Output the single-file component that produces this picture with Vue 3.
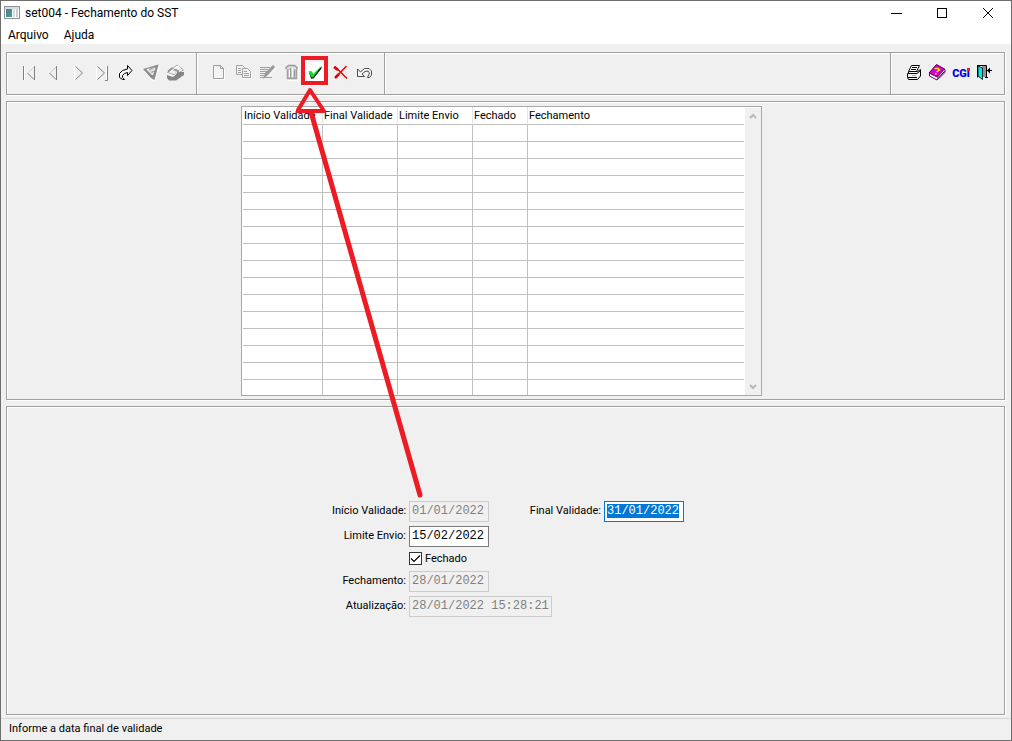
<script setup>
import { onMounted, ref } from 'vue'

const columns = ['Início Validade', 'Final Validade', 'Limite Envio', 'Fechado', 'Fechamento']
const emptyRows = 16

const inicio = ref('01/01/2022')
const final = ref('31/01/2022')
const limite = ref('15/02/2022')
const fechado = ref(true)
const fechamento = ref('28/01/2022')
const atualizacao = ref('28/01/2022 15:28:21')
const finalInput = ref(null)

onMounted(() => {
  finalInput.value.focus()
  finalInput.value.select()
})
</script>

<template>
  <div class="window">
    <header class="titlebar">
      <svg class="app-icon" width="16" height="14" viewBox="0 0 16 14" aria-hidden="true">
        <defs>
          <linearGradient id="pane" x1="0" y1="0" x2="1" y2="1">
            <stop offset="0" stop-color="#4a78a8" />
            <stop offset="1" stop-color="#4aa870" />
          </linearGradient>
        </defs>
        <rect x="0.5" y="0.5" width="15" height="12" fill="#fff" stroke="#8c9298" />
        <rect x="1" y="1" width="14" height="2" fill="#d8dce0" />
        <rect x="2" y="3" width="6" height="8" fill="url(#pane)" />
        <rect x="9" y="3" width="2" height="8" fill="#d5dde2" />
        <rect x="12" y="3" width="2" height="8" fill="#c8d0d4" />
      </svg>
      <h1>set004 - Fechamento do SST</h1>
      <div class="controls">
        <button type="button" aria-label="Minimizar"><svg width="12" height="12" viewBox="0 0 12 12"><path d="M1 6.500H12" stroke="#000" /></svg></button>
        <button type="button" aria-label="Maximizar"><svg width="12" height="12" viewBox="0 0 12 12"><rect x="1.500" y="1.500" width="9" height="9" fill="none" stroke="#000" /></svg></button>
        <button type="button" aria-label="Fechar"><svg width="12" height="12" viewBox="0 0 12 12"><path d="M1 1L11 11M11 1L1 11" stroke="#000" /></svg></button>
      </div>
    </header>

    <nav class="menu">
      <button type="button">Arquivo</button>
      <button type="button">Ajuda</button>
    </nav>

    <main class="body">
      <div class="toolbar etched">
        <div class="group">
          <button type="button" aria-label="Primeiro">
            <svg viewBox="16 62 24 24"><path d="M23.500 66V80M27 72L33 66" stroke="#fff" fill="none" /><path d="M22.500 66V80M33.500 66V80M33 79.500L26.500 73" stroke="#808080" fill="none" /><path d="M27 72.500L33 66.500" stroke="#c4c4c4" /><path d="M26 72L32.500 65.500" stroke="#fff" /></svg>
          </button>
          <button type="button" aria-label="Anterior">
            <svg viewBox="40 62 24 24"><path d="M48 72.500L55 65.500" stroke="#fff" /><path d="M55.500 66V80M55 79.500L48.500 73" stroke="#808080" fill="none" /><path d="M49 72.500L55 67" stroke="#c4c4c4" /></svg>
          </button>
          <button type="button" aria-label="Próximo">
            <svg viewBox="64 62 24 24"><path d="M73.500 66V80" stroke="#fff" /><path d="M74.500 66.500L81.500 73L74.500 79.500" stroke="#808080" fill="none" /></svg>
          </button>
          <button type="button" aria-label="Último">
            <svg viewBox="88 62 24 24"><path d="M95.500 66V80M105.500 66V80" stroke="#fff" /><path d="M96.500 66.500L103.500 73L96.500 79.500M106.500 66V80.500H104" stroke="#808080" fill="none" /></svg>
          </button>
          <button type="button" aria-label="Ir para">
            <svg viewBox="112 62 24 24"><path d="M121.500 79.500L118.500 77.500V73.500L121.500 70.500L126.500 69V65.500L131 70.500L126.500 75.500V72.500L123.500 73.500L121.500 75.500V77.500L123.500 79.500Z" fill="#f4f4f4" stroke="#000" /></svg>
          </button>
          <button type="button" aria-label="Filtrar">
            <svg viewBox="136 62 24 24"><path d="M143 71L153 82L158.500 66" stroke="#fff" fill="none" /><path d="M142 69L157.500 64.500L153.500 80L150 78Z" fill="#8c8c8c" /><path d="M146 69.500L154 67.500L151.500 75Z" fill="#d8d8d8" stroke="#fff" /><path d="M148 69.500L154.500 67M150.500 72.500L154 71" stroke="#909090" /></svg>
          </button>
          <button type="button" aria-label="Consultar">
            <svg viewBox="159 62 24 24"><path d="M165.500 72.500L175 65L181.500 70L173 75Z" fill="#f0f0f0" stroke="#aaa" /><path d="M165 75L171 77L174 72H182V75L174 80.500H167L165 78Z" fill="#858585" /><path d="M166 71.500L170 68.500L177 71.500" stroke="#999" fill="none" stroke-width="2" /><path d="M169 71L176 66L179 69M166 74L172 76L175 72" stroke="#fff" fill="none" /></svg>
          </button>
        </div>
        <div class="group">
          <button type="button" aria-label="Novo">
            <svg viewBox="205 62 24 24"><path d="M213.500 79.500H223.500V69" stroke="#fff" fill="none" /><path d="M212.500 65.500H219.500L222.500 68.500V78.500H212.500ZM219.500 65.500V68.500H222.500" fill="#f4f4f4" stroke="#a0a0a0" /></svg>
          </button>
          <button type="button" aria-label="Copiar">
            <svg viewBox="229 62 24 24"><g fill="#f2f2f2" stroke="#a0a0a0"><path d="M235.500 65.500H241.500L243.500 67.500V74.500H235.500Z" /><path d="M241.500 68.500H246.500L249.500 71.500V77.500H241.500Z" /></g><path d="M237 68.500H240M237 70.500H240M237 72.500H240M243 71.500H246M243 73.500H248M243 75.500H248" stroke="#a0a0a0" /><path d="M242 78.500H250.500V72" stroke="#fff" fill="none" /></svg>
          </button>
          <button type="button" aria-label="Editar">
            <svg viewBox="253 62 24 24"><path d="M259 67.500H269M259 69.500H267M259 71.500H266M259 73.500H264M259 75.500H263M259 77.500H271" stroke="#a0a0a0" /><path d="M262 79L264 73L272 65L274 67L267 75Z" fill="#999" /><path d="M268 76L275 68" stroke="#fff" /></svg>
          </button>
          <button type="button" aria-label="Excluir">
            <svg viewBox="277 62 24 24"><path d="M297.500 67V70L296.500 80.500H287" stroke="#fff" fill="none" /><path d="M285 69V67.500L287.500 65.500H293.500L296 67.500V69" fill="#ddd" stroke="#999" stroke-width="1.500" /><path d="M286.500 69V78.500H295.500V69" fill="#ccc" stroke="#a0a0a0" stroke-width="1.500" /><path d="M289.500 68V78M293.500 70V78" stroke="#999" /><path d="M288.500 70V77M291.500 68V77" stroke="#fff" /></svg>
          </button>
          <button type="button" class="confirm" aria-label="Confirmar">
            <svg viewBox="301 62 24 24"><path d="M308 72.500H311L312.500 75L320.500 66.500V68.500L312.500 78.500H310Z" fill="#000" /><path d="M308 71.500H310.500L312 74.500L320 66.500L312 77H310.500Z" fill="#00ef20" stroke="#00e820" stroke-width=".7" /></svg>
          </button>
          <button type="button" aria-label="Cancelar">
            <svg viewBox="325 62 24 24"><path d="M334 66.500L346 78.500M345.500 66L335 77" stroke="#f00000" stroke-width="1.500" fill="none" /><path d="M333 67L337 70M334 78L338 74" stroke="#e00000" stroke-width="2.500" /></svg>
          </button>
          <button type="button" aria-label="Desfazer">
            <svg viewBox="349 62 24 24"><path d="M356.500 69V76.500H363.500L361 74L364 71.500L367 71L368.500 73L366.500 77.500H368.500L370.500 75V71L368 68.500H363.500L359.500 72Z" fill="#f6f6f6" stroke="#222" stroke-width=".8" /></svg>
          </button>
        </div>
        <div class="group filler"></div>
        <div class="group system">
          <button type="button" aria-label="Imprimir">
            <svg viewBox="900 62 24 24"><path d="M910.500 65.500H918.500L915.500 71.500H907.500Z" fill="#fff" stroke="#000" /><path d="M911 67.500H916M910 69.500H915" stroke="#000" /><path d="M906.500 73.500L908.500 71.500H916.500L919.500 69.500V76L916.500 79.500H907.500L906.500 77.500Z" fill="#eee" stroke="#000" /><path d="M907 73.500H916L919 71M907 77.500H916" stroke="#000" fill="none" /><path d="M911 75.500H915" stroke="#cccc00" /></svg>
          </button>
          <button type="button" aria-label="Ajuda">
            <svg viewBox="924 62 24 24"><path d="M928.500 73L935.500 65L944 69.500V72.500L936 80L928.500 76Z" fill="#fff" stroke="#700070" /><path d="M928 73L935.500 64.500L943.500 69L936 77Z" fill="#d000d0" stroke="#600060" /><path d="M933.500 68.500H937L938.500 70L935.500 72M934 73.500L935.500 74" stroke="#ffe800" stroke-width="1.500" fill="none" /><path d="M936 78.500L943.500 71.500" stroke="#000" /></svg>
          </button>
          <button type="button" class="brand"><span>CGi</span><i></i></button>
          <button type="button" aria-label="Sair">
            <svg viewBox="972 62 24 24"><path d="M976.500 66V77.500M976 65.500H985.500V77" fill="none" stroke="#000" /><rect x="981" y="66" width="4" height="11" fill="#909090" /><path d="M977 66L981.500 68V79.500L977 76Z" fill="#00e8e8" stroke="#000" stroke-width=".8" /><path d="M984 77.500H987M986 70.500H991" stroke="#000" /><path d="M986 70.500L989 67.500V73.500Z" fill="#000" /></svg>
          </button>
        </div>
      </div>

      <section class="list etched">
        <div class="grid">
          <table>
            <thead>
              <tr><th v-for="c in columns" :key="c" scope="col">{{ c }}</th></tr>
            </thead>
            <tbody>
              <tr v-for="r in emptyRows" :key="r"><td v-for="c in columns" :key="c"></td></tr>
            </tbody>
          </table>
          <div class="scroll">
            <button type="button" aria-label="Rolar para cima"><svg width="8" height="6" viewBox="0 0 8 6"><path d="M1 5L4 2L7 5" fill="none" stroke="#b8b8b8" stroke-width="2" /></svg></button>
            <button type="button" aria-label="Rolar para baixo"><svg width="8" height="6" viewBox="0 0 8 6"><path d="M1 1L4 4L7 1" fill="none" stroke="#b8b8b8" stroke-width="2" /></svg></button>
          </div>
        </div>
      </section>

      <section class="detail etched">
        <form class="form" @submit.prevent>
          <label for="inicio">Início Validade:</label>
          <input id="inicio" v-model="inicio" class="date" type="text" disabled>
          <label for="final">Final Validade:</label>
          <input id="final" ref="finalInput" v-model="final" class="date" type="text">

          <label for="limite" class="start">Limite Envio:</label>
          <input id="limite" v-model="limite" class="date" type="text">

          <div class="check">
            <input id="fechado" v-model="fechado" type="checkbox">
            <label for="fechado">Fechado</label>
          </div>

          <label for="fechamento" class="start">Fechamento:</label>
          <input id="fechamento" v-model="fechamento" class="date" type="text" disabled>

          <label for="atualizacao" class="start">Atualização:</label>
          <input id="atualizacao" v-model="atualizacao" class="stamp" type="text" disabled>
        </form>
      </section>
    </main>

    <footer class="status">Informe a data final de validade</footer>

    <svg class="callout" width="140" height="450" viewBox="296 52 140 450" aria-hidden="true">
      <g fill="none" stroke="#ed1c24">
        <rect x="303" y="58" width="23" height="25" stroke-width="4" />
        <path d="M310 90L297.500 111H324Z" stroke-width="4" stroke-linejoin="round" />
        <path d="M311 112L420 495" stroke-width="5" stroke-linecap="round" />
      </g>
    </svg>
  </div>
</template>

<style>
body { margin: 0; }
</style>

<style scoped>
* { box-sizing: border-box; }
.window {
  position: relative;
  display: flex;
  flex-direction: column;
  min-height: 100vh;
  border: 1px solid #6e6e6e;
  background: #f0f0f0;
  color: #000;
  font: 11px/14px Roboto, "Liberation Sans", sans-serif;
}
button {
  display: flex;
  align-items: center;
  justify-content: center;
  margin: 0;
  padding: 0;
  border: 0;
  background: none;
  color: inherit;
  font: inherit;
}
.titlebar {
  display: flex;
  align-items: center;
  height: 24px;
  padding-left: 3px;
  background: #fff;
}
h1 {
  flex: 1;
  margin: 0 0 0 5px;
  font: 12px/16px Roboto, "Open Sans", sans-serif;
}
.controls { display: flex; }
.controls button { width: 46px; height: 24px; }
.menu {
  display: flex;
  gap: 15px;
  height: 19px;
  padding-left: 7px;
  background: #fff;
}
.menu button { font: 12px/20px Roboto, "Open Sans", sans-serif; }
.body {
  display: flex;
  flex: 1;
  flex-direction: column;
  gap: 6px;
  padding: 8px 6px 3px 5px;
}
.etched {
  border: 1px solid #a0a0a0;
  box-shadow: inset 1px 1px #fff, 1px 1px #fff;
}
.toolbar { display: flex; height: 43px; }
.group {
  display: flex;
  align-items: center;
  width: 190px;
  padding-left: 10px;
  border-right: 1px solid #a0a0a0;
  box-shadow: 1px 0 #fff;
}
.group + .group { width: 188px; padding-left: 9px; }
.group.filler { flex: 1; }
.group.system { width: 113px; padding-left: 10px; border-right: 0; box-shadow: none; }
.group button { width: 24px; height: 24px; flex: none; }
.group svg { width: 24px; height: 24px; overflow: visible; }
.group .confirm { background: #fff; }
.group .brand {
  position: relative;
  color: #0000f0;
  font: 900 11px/14px Roboto, sans-serif;
}
.brand i {
  position: absolute;
  top: 6px;
  right: 3px;
  width: 3px;
  height: 3px;
  background: #f02020;
}
.list {
  display: flex;
  justify-content: center;
  padding: 4px 8px 3px 0;
}
.grid {
  display: flex;
  width: 521px;
  height: 290px;
  overflow: hidden;
  border: 1px solid #a8a8ac;
  background: #fff;
}
table {
  flex: 1;
  margin: 0 1px;
  border-collapse: separate;
  border-spacing: 0;
  table-layout: fixed;
}
th, td {
  height: 17px;
  padding: 0 0 0 1px;
  border-right: 1px solid #c0c0c0;
  border-bottom: 1px solid #c0c0c0;
  font-weight: normal;
  line-height: 16px;
  text-align: left;
  white-space: nowrap;
}
th { border-right-color: #e4e4e4; }
th:nth-child(1) { width: 80px; }
th:nth-child(2), th:nth-child(3) { width: 75px; }
th:nth-child(4) { width: 55px; }
th:last-child, td:last-child { border-right: 0; }
thead th { height: 18px; }
.scroll {
  display: flex;
  flex-direction: column;
  justify-content: space-between;
  width: 16px;
  margin-top: 1px;
  background: #f0f0f0;
}
.scroll button { width: 15px; height: 16px; }
.detail {
  display: flex;
  flex: 1;
  align-items: center;
  justify-content: center;
  padding: 0 0 4px 5px;
}
.form {
  display: grid;
  grid-template-columns: 74px 80px 109px 80px;
  grid-template-rows: 21px 21px 16px 21px 21px;
  gap: 4px 3px;
}
.form label {
  align-self: center;
  text-align: right;
  white-space: nowrap;
}
.form .start { grid-column: 1; }
.form input[type="text"] {
  width: 80px;
  height: 21px;
  padding: 1px 2px;
  border: 1px solid #7a7a7a;
  border-radius: 0;
  outline: 0;
  background: #fff;
  color: #000;
  font: 12px/15px "Liberation Mono", "Courier New", monospace;
}
.form input[type="text"]:disabled {
  border-color: #ccc;
  background: #f0f0f0;
  color: #808080;
}
.form input[type="text"]:focus { border-color: #0078d7; }
.form input::selection { background: #0078d7; color: #fff; }
.form input.stamp { grid-column: 2 / 4; width: 143px; }
.check {
  grid-column: 2;
  display: flex;
  align-items: center;
  gap: 3px;
}
.check input {
  width: 13px;
  height: 13px;
  margin: 0;
  border: 1px solid #333;
  appearance: none;
  background: #fff;
}
.check input:checked {
  background: #fff url('data:image/svg+xml,<svg xmlns="http://www.w3.org/2000/svg" viewBox="0 0 11 11"><path d="M1 5.500L4 8.500L10 2.500" fill="none" stroke="black" stroke-width="1.200"/></svg>');
}
.status {
  height: 22px;
  padding-left: 8px;
  border-top: 1px solid #d7d7d7;
  line-height: 20px;
}
.callout {
  position: absolute;
  top: 51px;
  left: 295px;
  pointer-events: none;
}
</style>
